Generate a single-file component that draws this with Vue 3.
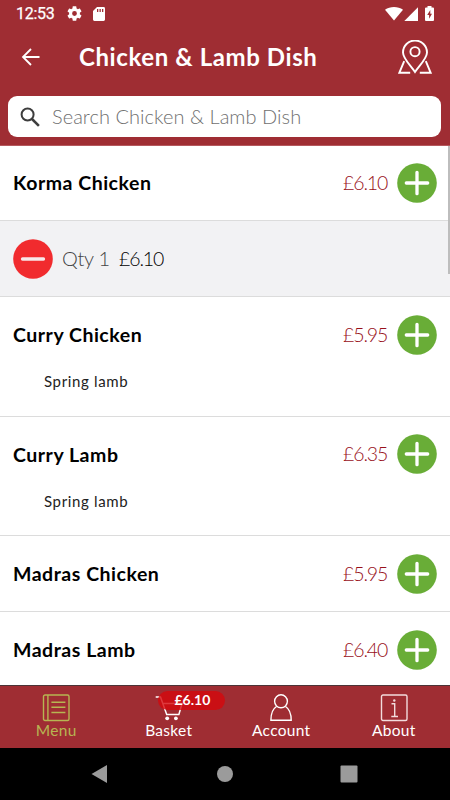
<script setup>
const items = [
  { name: 'Korma Chicken', price: '£6.10', qty: 1 },
  { name: 'Curry Chicken', price: '£5.95', note: 'Spring lamb' },
  { name: 'Curry Lamb', price: '£6.35', note: 'Spring lamb' },
  { name: 'Madras Chicken', price: '£5.95' },
  { name: 'Madras Lamb', price: '£6.40' },
]
</script>

<template>
  <div class="screen">
    <header class="header">
      <div class="status">
        <span class="clock">12:53</span>
        <svg class="gear" width="15" height="15" viewBox="2 2 20 20"><path fill="#fff" d="M19.14 12.94c.04-.3.06-.61.06-.94s-.02-.64-.07-.94l2.03-1.58a.49.49 0 0 0 .12-.61l-1.92-3.32a.49.49 0 0 0-.59-.22l-2.39.96a7 7 0 0 0-1.62-.94l-.36-2.54A.48.48 0 0 0 13.92 2.4h-3.84c-.24 0-.43.17-.47.41l-.36 2.54c-.59.24-1.13.57-1.62.94l-2.39-.96a.48.48 0 0 0-.59.22L2.74 8.87a.48.48 0 0 0 .12.61l2.03 1.58c-.05.3-.09.63-.09.94s.02.64.07.94l-2.03 1.58a.49.49 0 0 0-.12.61l1.92 3.32c.12.22.37.29.59.22l2.39-.96c.5.38 1.03.7 1.62.94l.36 2.54c.05.24.24.41.48.41h3.84c.24 0 .44-.17.47-.41l.36-2.54c.59-.24 1.13-.56 1.62-.94l2.39.96c.22.08.47 0 .59-.22l1.92-3.32a.48.48 0 0 0-.12-.61zM12 15.200a3.200 3.200 0 1 1 0-6.400 3.200 3.200 0 0 1 0 6.400z"/></svg>
        <svg class="card" width="12" height="14" viewBox="0 0 12 14"><path fill="#fff" fill-rule="evenodd" d="M4 0h6.600A1.400 1.400 0 0 1 12 1.400v11.200a1.400 1.400 0 0 1-1.400 1.400H1.400A1.400 1.400 0 0 1 0 12.600V4zM4 2v3h1.300V2zM6.500 2v3h1.300V2zM9 2v3h1.300V2z"/></svg>
        <svg class="wifi" width="18" height="14" viewBox="0 0 18 14"><path fill="#fff" d="M0 2.700C5-.9 13-.9 18 2.700L9 13.500z"/></svg>
        <svg class="signal" width="14" height="14" viewBox="0 0 14 14"><path fill="#fff" d="M14 .3V14H.3z"/></svg>
        <svg class="battery" width="9" height="15" viewBox="0 0 9 15"><path fill="#fff" d="M2.500 0h4v1.500H8a1 1 0 0 1 1 1V14a1 1 0 0 1-1 1H1a1 1 0 0 1-1-1V2.500a1 1 0 0 1 1-1h1.500z"/><path fill="#9f2d33" d="M5.300 4 2.200 9h1.900v3.700L7 7.700H5.300z"/></svg>
      </div>
      <div class="bar">
        <svg class="back" width="20" height="18" viewBox="0 0 20 18" fill="none" stroke="#fff" stroke-width="1.800"><path d="M18.500 9H2M10 1 2 9l8 8"/></svg>
        <h1 class="title">Chicken &amp; Lamb Dish</h1>
        <svg class="pin" width="34" height="34" viewBox="0 0 34 34" fill="none" stroke="#fff" stroke-width="1.900"><path d="M17 32C12.500 25.500 5 18.500 5 12.500a12 12 0 0 1 24 0C29 18.500 21.500 25.500 17 32z"/><circle cx="17" cy="11.700" r="4.600"/><path d="M6.200 21.200 1.400 32.700h10.800M27.800 21.200l4.800 11.500H21.800"/></svg>
      </div>
      <div class="search">
        <svg width="20" height="20" viewBox="0 0 20 20" fill="none" stroke="#3d3d3d" stroke-width="2"><circle cx="7.600" cy="7.500" r="6"/><path d="m12 12 6.900 6.900" stroke-width="2.500"/></svg>
        <span class="placeholder">Search Chicken &amp; Lamb Dish</span>
      </div>
    </header>

    <main class="list">
      <section v-for="item in items" :key="item.name" class="item" :class="{ tall: item.note }">
        <div class="row">
          <span class="name">{{ item.name }}</span>
          <span class="price">{{ item.price }}</span>
          <svg class="round" viewBox="0 0 40 40"><circle cx="20" cy="20" r="19.800" fill="#69ad37"/><path d="M20 9.300v21.400M9.300 20h21.400" stroke="#fff" stroke-width="3.300" stroke-linecap="round"/></svg>
        </div>
        <p v-if="item.note" class="note">{{ item.note }}</p>
        <div v-if="item.qty" class="quantity">
          <svg class="round" viewBox="0 0 40 40"><circle cx="20" cy="20" r="19.800" fill="#f12b2e"/><path d="M9.500 20h21" stroke="#f7e9ea" stroke-width="3.300" stroke-linecap="round"/></svg>
          <span class="qty">Qty {{ item.qty }}</span>
          <span class="total">{{ item.price }}</span>
        </div>
      </section>
      <div class="thumb"></div>
    </main>

    <nav class="tabs">
      <div class="tab active">
        <svg width="28" height="28" viewBox="0 0 28 28" fill="none" stroke="#b7b552" stroke-width="1.400"><rect x="1.500" y="1" width="25.500" height="25.500" rx="1.500"/><path d="M5.900 1v25.500M9.400 8.300h14M9.400 13.200h14M9.400 18.500h14"/></svg>
        <span>Menu</span>
      </div>
      <div class="tab">
        <svg width="28" height="28" viewBox="0 0 28 28" fill="none" stroke="#fff" stroke-width="1.500"><path d="M.7 3h4.800l6.200 17.500h12.200L27 9.500H7.800"/><circle cx="12.200" cy="24.300" r="1.900" fill="#fff" stroke="none"/><circle cx="20.900" cy="24.300" r="1.900" fill="#fff" stroke="none"/></svg>
        <span>Basket</span>
        <b class="badge">£6.10</b>
      </div>
      <div class="tab">
        <svg width="28" height="28" viewBox="0 0 28 28" fill="none" stroke="#fff" stroke-width="1.400"><ellipse cx="14" cy="7.300" rx="6.400" ry="6.500"/><path d="M9.500 12.500C5.500 15 3.900 18.500 3.900 26.300h20.300c0-7.800-1.700-11.300-5.700-13.800"/></svg>
        <span>Account</span>
      </div>
      <div class="tab">
        <svg width="28" height="28" viewBox="0 0 28 28" fill="none" stroke="#f3dcdd" stroke-width="1.400"><rect x="1.500" y="1" width="25.500" height="25.500" rx="1.500"/><path d="M11.500 9.800h3.200v12.700M11.300 22.500h6.700"/><circle cx="14.300" cy="6.500" r="1.200" fill="#f3dcdd" stroke="none"/></svg>
        <span>About</span>
      </div>
    </nav>

    <footer class="system">
      <svg width="18" height="20" viewBox="0 0 18 20"><path fill="#9b9b9b" d="M16 1v18L.5 10z"/></svg>
      <svg width="18" height="18" viewBox="0 0 18 18"><circle cx="9" cy="9" r="8" fill="#9b9b9b"/></svg>
      <svg width="18" height="18" viewBox="0 0 18 18"><rect x=".5" y=".5" width="17" height="17" rx="1" fill="#9b9b9b"/></svg>
    </footer>
  </div>
</template>

<style>
body { margin: 0; background: #000; }
</style>

<style scoped>
.screen { box-sizing: border-box; width: 450px; height: 800px; display: flex; flex-direction: column; overflow: hidden; background: #fff; font-family: Lato, "Open Sans", sans-serif; color: #000; }
.screen svg { display: block; flex: none; }
.header { position: relative; z-index: 1; height: 145px; background: #9f2d33; box-shadow: 0 1px 0 #b5585d; color: #fff; flex: none; }
.status { height: 27px; display: flex; align-items: center; padding: 0 16px 0 16px; }
.clock { font: 400 16px/27px Roboto, sans-serif; -webkit-text-stroke: .25px #fff; letter-spacing: -.3px; width: 51px; }
.card { margin-left: 11px; }
.wifi { margin-left: auto; }
.signal { margin-left: 1px; }
.battery { margin-left: 7px; }
.bar { height: 60px; display: flex; align-items: center; padding: 0 18px 0 21px; }
.title { margin: 0 0 0 38px; flex: 1; font-size: 24px; line-height: 30px; font-weight: 700; letter-spacing: .6px; white-space: nowrap; }
.search { height: 41px; margin: 9px 9px 0 8px; padding: 0 12px; display: flex; align-items: center; gap: 12px; border-radius: 9px; background: #fff; }
.placeholder { padding-bottom: 2px; font-size: 20px; font-weight: 300; letter-spacing: .05px; color: #707070; white-space: nowrap; }
.list { position: relative; height: 540px; flex: none; overflow: hidden; }
.item { border-bottom: 1px solid #dcdcdc; box-sizing: border-box; }
.item.tall { height: 119.500px; }
.row { height: 75px; display: flex; align-items: center; padding: 0 13px; }
.name { flex: 1; font-size: 19.500px; font-weight: 700; letter-spacing: .52px; white-space: nowrap; }
.price, .total { padding-bottom: 1px; font-size: 19.500px; letter-spacing: -1.100px; }
.price { width: 54px; font-weight: 300; color: #98101a; }
.round { width: 40px; height: 40px; }
.note { margin: -1px 0 0; padding-left: 44px; font-size: 15px; line-height: 20px; letter-spacing: .65px; color: #222; }
.quantity { height: 76px; box-sizing: border-box; border-top: 1px solid #dcdcdc; display: flex; align-items: center; padding: 0 13px; font-size: 20px; font-weight: 300; background: #f2f2f4; }
.qty { width: 57px; margin-left: 9px; padding-bottom: 2px; letter-spacing: -.3px; color: #444; }
.thumb { position: absolute; right: 0; top: 0; width: 2px; height: 129px; background: #bdbdbd; }
.tabs { height: 63px; box-sizing: border-box; border-top: 1px solid #4b3437; flex: none; display: grid; grid-template-columns: repeat(4, 1fr); background: #9f2d33; color: #fff; }
.tab { position: relative; display: flex; flex-direction: column; align-items: center; padding-top: 8px; font-size: 15.500px; line-height: 16px; letter-spacing: .3px; }
.active { color: #b7b552; }
.badge { position: absolute; left: 45px; top: 5px; width: 67px; height: 19px; box-sizing: border-box; padding-left: 17px; border-radius: 10px; background: rgba(213, 8, 12, .8); font-size: 14px; line-height: 18px; letter-spacing: 0; }
.system { flex: 1; display: flex; align-items: center; justify-content: space-between; padding: 0 92px 0 91px; background: #000; }
</style>
